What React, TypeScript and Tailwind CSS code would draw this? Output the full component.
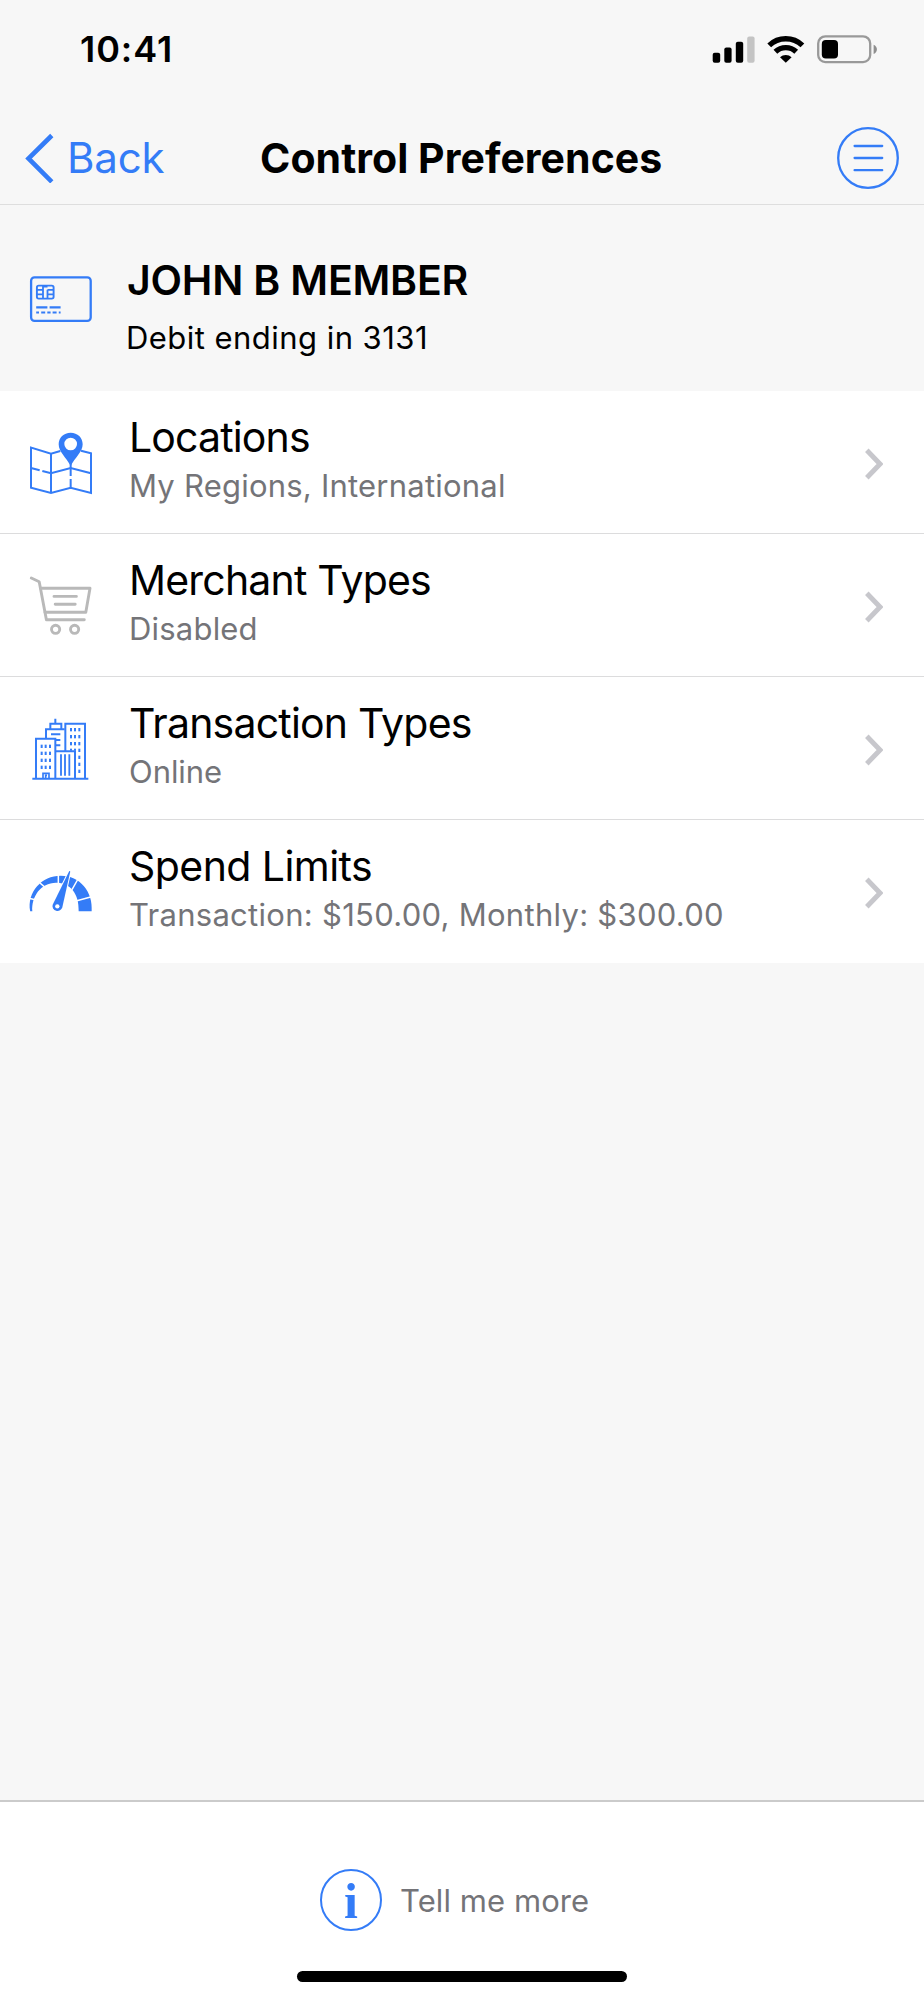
import React from "react";

const BLUE = "#347cf7";

function SignalIcon() {
  return (
    <svg width="44" height="30" viewBox="712 34 44 30">
      <rect x="712.7" y="52.7" width="7.5" height="10" rx="2" />
      <rect x="724.3" y="47.4" width="7.3" height="15.3" rx="2" />
      <rect x="735.8" y="41.8" width="7.4" height="20.9" rx="2" />
      <rect x="747.2" y="36.6" width="7.4" height="26.1" rx="2" fill="#c4c4c4" />
    </svg>
  );
}

function WifiIcon() {
  return (
    <svg width="40" height="30" viewBox="766 34 40 30">
      <g fill="none" stroke="#000" strokeWidth="5.4">
        <path d="M769.2 45.4 A24 24 0 0 1 802.4 45.4" />
        <path d="M775.4 51.8 A15 15 0 0 1 796.2 51.8" />
      </g>
      <path d="M780 57.2 A8.4 8.4 0 0 1 791.6 57.2 L785.8 62.8 Z" />
    </svg>
  );
}

function BatteryIcon() {
  return (
    <svg width="62" height="30" viewBox="816 34 62 30">
      <rect x="818.2" y="36.3" width="52" height="25.8" rx="7.2" fill="none" stroke="#999" strokeWidth="2.3" />
      <rect x="821.8" y="40" width="16.2" height="18.4" rx="4" />
      <path d="M873.6 44.8 C878 46.5 878 52.3 873.6 54 Z" fill="#8e8e8e" />
    </svg>
  );
}

function CardIcon() {
  return (
    <svg width="64" height="48" viewBox="29 275 64 48" fill="none" stroke={BLUE} strokeWidth="2.3">
      <rect x="31.1" y="277.3" width="59.6" height="43.6" rx="3.4" />
      <rect x="36.9" y="285.6" width="16.7" height="13" rx="1.8" strokeWidth="1.9" />
      <path d="M37 289.8H43M37 294.4H43M47.5 289.8H53.5M47.5 294.4H53.5M43 286V298.5M47.5 298.5V289.8M43 286.5H47.5" strokeWidth="1.8" />
      <path d="M36.2 307.4H47.4M49.6 307.4H60.6" strokeWidth="2.1" />
      <path d="M36.2 312.5H39M41.2 312.5H45.2M47.3 312.5H50.6M52.6 312.5H56.6M58.8 312.5H60.6" strokeWidth="2.1" />
    </svg>
  );
}

function MapIcon() {
  return (
    <svg width="90" height="90" viewBox="0 0 270 270" fill="none" stroke={BLUE} strokeWidth="6">
      <path d="M121 93L93 101L33 83V203L93 219L152 203L213 219V100L183 92" />
      <path d="M93 101V219M33 144L59 151M67 153L93 160L152 144L213 160" />
      <path d="M152 130V168M152 177V203" />
      <path
        d="M152 38C131 38 116 53 116 73C116 96 139 113 152 138C165 113 188 96 188 73C188 53 173 38 152 38ZM152 53A19 19 0 1 1 152 91A19 19 0 1 1 152 53Z"
        fill={BLUE}
        fillRule="evenodd"
        stroke="none"
      />
    </svg>
  );
}

function CartIcon() {
  return (
    <svg
      width="64"
      height="64"
      viewBox="29 574 64 64"
      fill="none"
      stroke="#b9b9b9"
      strokeWidth="2.9"
      strokeLinecap="round"
      strokeLinejoin="round"
    >
      <path d="M31.3 578L39.2 581.7L46.4 619.8H84.3" />
      <path d="M40.6 588.2H90L85.8 612.2H45" />
      <path d="M54 596.4H76.4M55.2 604.3H75.2" />
      <circle cx="55.6" cy="629.3" r="4.1" />
      <circle cx="74.6" cy="629.3" r="4.1" />
    </svg>
  );
}

function BuildingsIcon() {
  const left = [124, 145, 166, 187];
  const right = [74, 95, 116];
  return (
    <svg width="90" height="90" viewBox="0 0 270 270" fill="none" stroke={BLUE} strokeWidth="6">
      <path d="M37 221H205" />
      <path d="M48 221V101H106V221M78 100V73H134M91 72V56H124V72M106 41V56" />
      <path d="M136 138V56H195V221M107 139H165V221" />
      <path d="M93 88H121M107 105H121M107 121H121" />
      <path d="M123 148V212M135 148V212M148 148V212" strokeWidth="5.5" />
      <path d="M69 220V205H87V220M77 220V211H81" strokeWidth="5" />
      <g fill={BLUE} stroke="none">
        {left.map((y) =>
          [65, 77, 90].map((x) => <rect key={`${x}-${y}`} x={x - 3} y={y - 5} width="6" height="10" />)
        )}
        {right.map((y) =>
          [153, 165, 178].map((x) => <rect key={`${x}-${y}`} x={x - 3} y={y - 5} width="6" height="10" />)
        )}
        <rect x="150" y="131" width="6" height="6" />
        <rect x="162" y="131" width="6" height="6" />
        {[136, 157, 178, 199].map((y) => (
          <rect key={y} x="175" y={y - 5} width="6" height="10" />
        ))}
      </g>
    </svg>
  );
}

function GaugeIcon() {
  return (
    <svg width="90" height="70" viewBox="0 0 270 210">
      <path
        d="M30.5 169C20 110 66 62 122 62C180 62 220 110 215 169H176C178 115 150 83 108 83C62 83 34 125 37 169Z"
        fill={BLUE}
      />
      <path d="M26 130L46 134M60 84L76 98M115 58V88M174 72L156 104M168 138L220 124" stroke="#fff" strokeWidth="4.5" />
      <path
        d="M147.5 49C149 47 151 48 150.5 51L127 157A15 15 0 1 1 98 149Z"
        fill={BLUE}
        stroke="#fff"
        strokeWidth="6"
        paintOrder="stroke"
      />
      <circle cx="112" cy="154" r="6.5" fill="#fff" />
    </svg>
  );
}

function Chevron() {
  return (
    <svg className="mt-[3px] ml-auto mr-[41px]" width="18" height="34" viewBox="0 0 18 34" fill="none" stroke="#c7c7cc" strokeWidth="4.9">
      <path d="M1.8 3.3L15 17L1.8 30.7" />
    </svg>
  );
}

interface RowProps {
  icon: React.ReactNode;
  title: string;
  detail: string;
  titleClass: string;
  detailClass: string;
  last?: boolean;
}

function Row({ icon, title, detail, titleClass, detailClass, last }: RowProps) {
  return (
    <li className={`flex h-[143px] items-center bg-white ${last ? "" : "border-b border-[#dcdcdd]"}`}>
      <div className="flex h-full w-[128px] shrink-0 items-start">{icon}</div>
      <div className="h-full whitespace-nowrap pt-[22px]">
        <div className={`text-[41px] leading-[48px] text-black ${titleClass}`}>{title}</div>
        <div className={`mt-[5px] text-[31px] leading-[40px] text-[#747478] ${detailClass}`}>{detail}</div>
      </div>
      <Chevron />
    </li>
  );
}

export default function App() {
  return (
    <div className="flex h-[2000px] w-[924px] flex-col overflow-hidden bg-[#f7f7f7] font-['Inter',sans-serif] text-black">
      <div className="flex h-[110px] shrink-0 items-start justify-between pl-[80px] pr-[46px]">
        <div className="mt-[27px] text-[36px] font-semibold leading-[44px] tracking-[0.93px]">10:41</div>
        <div className="mt-[34px] flex gap-[10px]">
          <SignalIcon />
          <WifiIcon />
          <BatteryIcon />
        </div>
      </div>

      <header className="grid h-[95px] shrink-0 grid-cols-[260px_404px_1fr] items-center border-b border-[#dedede]">
        <button className="flex items-center pl-[25px] pt-px text-[#347cf7]">
          <svg width="30" height="50" viewBox="25 132 30 50" fill="none" stroke={BLUE} strokeWidth="4.6">
            <path d="M51.8 134.5L28.5 157.5L51.8 180.8" />
          </svg>
          <span className="ml-[12px] text-[42px] leading-[50px] tracking-[-0.2px]">Back</span>
        </button>
        <h1 className="whitespace-nowrap pt-px text-[41px] font-bold leading-[50px] tracking-[0.05px]">Control Preferences</h1>
        <svg className="mt-px ml-auto mr-[24px]" width="64" height="64" viewBox="0 0 64 64" fill="none" stroke={BLUE} strokeWidth="2.3">
          <circle cx="32" cy="32" r="29.8" />
          <path d="M18.6 20H46.2M18.6 32H46.2M18.6 44.2H46.2" strokeLinecap="round" />
        </svg>
      </header>

      <section className="flex h-[186px] shrink-0">
        <div className="w-[127px] shrink-0 pl-[29px] pt-[70px]">
          <CardIcon />
        </div>
        <div className="whitespace-nowrap pt-[51px]">
          <h2 className="text-[41px] font-semibold leading-[48px] tracking-[-0.2px]">JOHN B MEMBER</h2>
          <p className="-ml-px mt-[14px] text-[31px] leading-[40px] tracking-[0.46px]">Debit ending in 3131</p>
        </div>
      </section>

      <ul className="shrink-0">
        <Row
          icon={<div className="ml-[20px] mt-[29px]"><MapIcon /></div>}
          title="Locations"
          detail="My Regions, International"
          titleClass="pl-px tracking-[-0.85px]"
          detailClass="pl-px tracking-[0.22px]"
        />
        <Row
          icon={<div className="ml-[29px] mt-[40px]"><CartIcon /></div>}
          title="Merchant Types"
          detail="Disabled"
          titleClass="pl-px tracking-[-0.8px]"
          detailClass="pl-px tracking-[0.2px]"
        />
        <Row
          icon={<div className="ml-[20px] mt-[28px]"><BuildingsIcon /></div>}
          title="Transaction Types"
          detail="Online"
          titleClass="pl-px tracking-[-0.8px]"
          detailClass="pl-px tracking-[-0.07px]"
        />
        <Row
          icon={<div className="ml-[20px] mt-[35px]"><GaugeIcon /></div>}
          title="Spend Limits"
          detail="Transaction: $150.00, Monthly: $300.00"
          titleClass="pl-px tracking-[-0.56px]"
          detailClass="pl-px tracking-[0.28px]"
          last
        />
      </ul>

      <main className="grow" />

      <footer className="flex h-[200px] shrink-0 flex-col items-center border-t-2 border-[#cbcbcb] bg-white">
        <button className="mt-[67px] flex h-[62px] items-center self-start pl-[320px] text-[#747478]">
          <span className="flex size-[62px] items-center justify-center rounded-full border-2 border-[#347cf7] pt-[2px] font-['Liberation_Serif',serif] text-[50px] font-bold leading-[58px] text-[#347cf7]">
            i
          </span>
          <span className="ml-[18px] pt-px text-[31px] leading-[40px] tracking-[0.07px]">Tell me more</span>
        </button>
        <div className="mt-[40px] h-[11px] w-[330px] rounded-full bg-black" />
      </footer>
    </div>
  );
}
